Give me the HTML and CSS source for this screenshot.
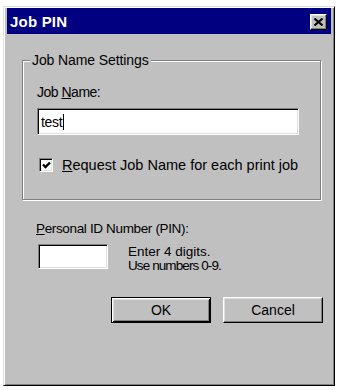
FILE: index.html
```html
<!DOCTYPE html>
<html>
<head>
<meta charset="utf-8">
<link rel="stylesheet" href="styles.css">
</head>
<body>
<div class="window">
  <div class="titlebar">
    <span class="title">Job PIN</span>
    <span class="close">
      <svg width="9" height="8" viewBox="0 0 9 8"><path d="M0.5 0.5 L8.5 7.5 M8.5 0.5 L0.5 7.5" stroke="#000" stroke-width="2" fill="none"/></svg>
    </span>
  </div>
  <div class="content">
    <div class="group">
      <span class="legend">Job Name Settings</span>
      <div class="label name-label">Job <u>N</u>ame:</div>
      <div class="textbox wide">test<span class="caret"></span></div>
      <div class="check">
        <span class="box"><svg width="9" height="9" viewBox="0 0 9 9"><path d="M1 3.5 L3.5 6 L8 1.5" stroke="#000" stroke-width="2.4" fill="none"/></svg></span>
        <span class="check-text"><u>R</u>equest Job Name for each print job</span>
      </div>
    </div>
    <div class="label pin-label"><u>P</u>ersonal ID Number (PIN):</div>
    <div class="pin-row">
      <div class="textbox pin"></div>
      <div class="hint"><span>Enter 4 digits.</span><span class="hint-2">Use numbers 0-9.</span></div>
    </div>
    <div class="buttons">
      <span class="btn default">OK</span>
      <span class="btn">Cancel</span>
    </div>
  </div>
</div>
</body>
</html>
```
FILE: styles.css
```css
html, body {
  margin: 0;
  padding: 0;
  background: #ffffff;
}
body {
  font-family: "Liberation Sans", Arial, sans-serif;
  font-size: 14px;
  color: #000;
}
.window {
  box-sizing: border-box;
  margin: 6px 0 0 3px;
  width: 332px;
  height: 380px;
  background: #c0c0c0;
  border: 1px solid;
  border-color: #dfdfdf #000 #000 #dfdfdf;
  box-shadow: inset 1px 1px 0 #fff, inset -1px -1px 0 #808080;
  padding: 1px 3px 3px 3px;
}
.titlebar {
  height: 26px;
  background: #000080;
  display: flex;
  align-items: center;
  justify-content: space-between;
  padding-left: 3px;
}
.title {
  color: #fff;
  font-weight: bold;
  font-size: 15px;
  letter-spacing: 0.2px;
}
.close {
  box-sizing: border-box;
  width: 17px;
  height: 16px;
  margin-right: 4px;
  margin-top: 1px;
  background: #c0c0c0;
  border: 1px solid;
  border-color: #fff #000 #000 #fff;
  box-shadow: inset -1px -1px 0 #808080, inset 1px 1px 0 #dfdfdf;
  display: flex;
  align-items: center;
  justify-content: center;
}
.content {
  padding: 0 10px 0 15px;
}
.group {
  position: relative;
  box-sizing: border-box;
  margin-top: 26px;
  height: 140px;
  border: 1px solid #808080;
  box-shadow: 1px 1px 0 #fff, inset 1px 1px 0 #fff;
  padding: 23px 0 0 14px;
}
.legend {
  position: absolute;
  top: -9px;
  left: 7px;
  padding: 0 2px;
  background: #c0c0c0;
  line-height: 16px;
  letter-spacing: -0.1px;
}
.label {
  line-height: 16px;
}
.name-label {
  letter-spacing: -0.5px;
}
.textbox {
  box-sizing: border-box;
  background: #fff;
  border: 1px solid;
  border-color: #808080 #fff #fff #808080;
  box-shadow: inset 1px 1px 0 #000, inset -1px -1px 0 #dfdfdf;
}
.wide {
  margin-top: 8px;
  width: 262px;
  height: 27px;
  padding: 5px 0 0 3px;
  line-height: 16px;
  font-size: 14px;
  letter-spacing: -0.3px;
}
.caret {
  display: inline-block;
  width: 1px;
  height: 16px;
  background: #000;
  vertical-align: top;
  margin-left: 1px;
}
.check {
  display: flex;
  align-items: center;
  margin-top: 22px;
  margin-left: 2px;
}
.box {
  box-sizing: border-box;
  width: 14px;
  height: 14px;
  background: #fff;
  border: 1px solid;
  border-color: #808080 #fff #fff #808080;
  box-shadow: inset 1px 1px 0 #000, inset -1px -1px 0 #dfdfdf;
  display: flex;
  align-items: center;
  justify-content: center;
}
.check-text {
  margin-left: 9px;
  line-height: 16px;
  font-size: 14.5px;
}
.pin-label {
  margin: 21px 0 0 14px;
  font-size: 13.5px;
  letter-spacing: -0.35px;
}
.pin-row {
  display: flex;
  align-items: flex-start;
  margin: 7px 0 0 16px;
}
.pin {
  width: 70px;
  height: 25px;
}
.hint {
  display: flex;
  flex-direction: column;
  margin: 1px 0 0 20px;
  line-height: 14px;
  font-size: 13.5px;
}
.hint-2 {
  letter-spacing: -0.9px;
}
.buttons {
  display: flex;
  justify-content: flex-end;
  gap: 12px;
  margin: 24px -2px 0 0;
}
.btn {
  box-sizing: border-box;
  width: 100px;
  height: 26px;
  display: flex;
  align-items: center;
  justify-content: center;
  background: #c0c0c0;
  border: 1px solid;
  border-color: #fff #000 #000 #fff;
  box-shadow: inset -1px -1px 0 #808080, inset 1px 1px 0 #dfdfdf;
}
.btn.default {
  border: 1px solid #000;
  box-shadow: inset 1px 1px 0 #fff, inset -1px -1px 0 #000, inset 2px 2px 0 #dfdfdf, inset -2px -2px 0 #808080;
}
```
